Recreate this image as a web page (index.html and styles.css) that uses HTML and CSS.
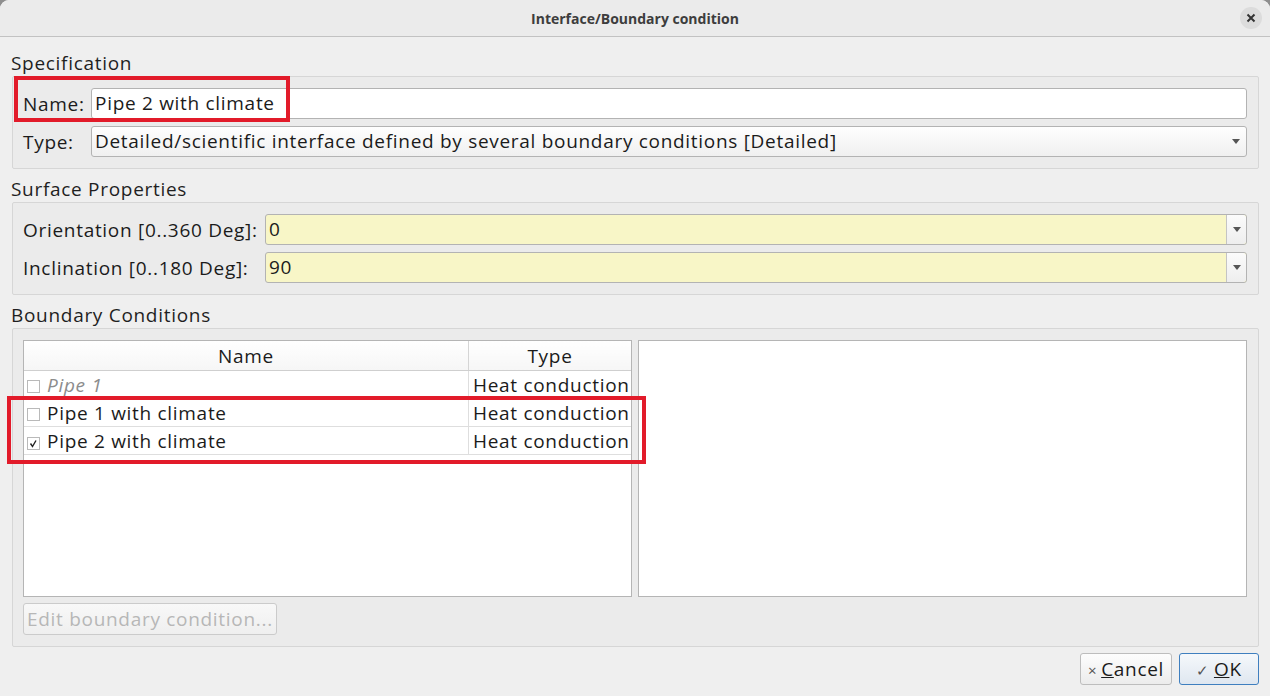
FILE: index.html
```html
<!DOCTYPE html>
<html lang="en">
<head>
  <meta charset="UTF-8">
  <title>Interface/Boundary condition</title>
  <link rel="stylesheet" href="styles.css">
</head>
<body>
  <div class="window">
    <div class="titlebar">
      <span></span>
      <div class="title">Interface/Boundary condition</div>
      <div class="close">
        <svg width="10" height="10" viewBox="0 0 10 10"><path d="M1.5 1.5 L8.5 8.5 M8.5 1.5 L1.5 8.5" stroke="#333" stroke-width="2"/></svg>
      </div>
    </div>

    <div class="content">
      <div class="section-title">Specification</div>
      <div class="group form spec">
        <label>Name:</label>
        <div class="lineedit">Pipe 2 with climate</div>
        <label>Type:</label>
        <div class="combo">
          <span class="value">Detailed/scientific interface defined by several boundary conditions [Detailed]</span>
          <span class="arrow"></span>
        </div>
      </div>

      <div class="section-title">Surface Properties</div>
      <div class="group form surface">
        <label>Orientation [0..360 Deg]:</label>
        <div class="combo editable">
          <span class="value">0</span>
          <span class="drop"><span class="arrow"></span></span>
        </div>
        <label>Inclination [0..180 Deg]:</label>
        <div class="combo editable">
          <span class="value">90</span>
          <span class="drop"><span class="arrow"></span></span>
        </div>
      </div>

      <div class="section-title">Boundary Conditions</div>
      <div class="group bc">
        <div class="panes">
          <div class="view">
            <table class="bc-table">
              <thead>
                <tr><th>Name</th><th>Type</th></tr>
              </thead>
              <tbody>
                <tr class="inactive">
                  <td><span class="check"></span><span class="item">Pipe 1</span></td>
                  <td>Heat conduction</td>
                </tr>
                <tr>
                  <td><span class="check"></span><span class="item">Pipe 1 with climate</span></td>
                  <td>Heat conduction</td>
                </tr>
                <tr>
                  <td>
                    <span class="check checked">
                      <svg width="11" height="11" viewBox="0 0 11 11"><path d="M2.5 5.5 L4.5 8.5 L8 2.5" fill="none" stroke="#222" stroke-width="1.4"/></svg>
                    </span><span class="item">Pipe 2 with climate</span>
                  </td>
                  <td>Heat conduction</td>
                </tr>
              </tbody>
            </table>
          </div>
          <div class="view"></div>
        </div>
        <div class="bc-actions">
          <button class="btn" disabled>Edit boundary condition...</button>
        </div>
      </div>

      <div class="footer">
        <button class="btn cancel"><span class="icon">&#215;</span><u>C</u>ancel</button>
        <button class="btn ok"><span class="icon">&#10003;</span><u>O</u>K</button>
      </div>
    </div>

    <!-- highlight frames -->
    <div class="mark mark-name"></div>
    <div class="mark mark-rows"></div>
  </div>
</body>
</html>
```

FILE: styles.css
```css
html, body {
  margin: 0;
  padding: 0;
  background: #8e8e8e;
}

body {
  font-family: "Open Sans", "Noto Sans", sans-serif;
  font-size: 19px;
  letter-spacing: 0.7px;
  color: #1b1b1b;
}

.window {
  position: relative;
  width: 1270px;
  height: 696px;
  background: #efefef;
  border-radius: 9px 9px 0 0;
  overflow: hidden;
}

.titlebar {
  display: grid;
  grid-template-columns: 1fr auto 1fr;
  align-items: center;
  height: 36px;
  background: #ebebeb;
  border-bottom: 1px solid #c2c2c2;
}

.title {
  font-size: 14px;
  font-weight: bold;
  letter-spacing: 0;
  color: #3d3d3d;
}

.close {
  justify-self: end;
  margin-right: 8px;
  width: 22px;
  height: 22px;
  border-radius: 50%;
  background: #dcdcdc;
  display: flex;
  align-items: center;
  justify-content: center;
}

.content {
  padding: 13px 11px 0 12px;
}

.section-title {
  height: 26px;
  line-height: 26px;
  margin-left: -1px;
  margin-top: 7px;
  color: #1f1f1f;
}

.section-title:first-child {
  margin-top: 0;
}

.group {
  background: #ebebeb;
  border: 1px solid #d6d6d6;
  border-radius: 2px;
  padding: 11px 11px 11px 10px;
}

.form {
  display: grid;
  align-items: center;
  row-gap: 7px;
  column-gap: 6px;
}

.spec {
  grid-template-columns: 62px 1fr;
}

.surface {
  grid-template-columns: 236px 1fr;
}

.lineedit, .combo {
  height: 29px;
  line-height: 29px;
  border: 1px solid #b3b3b3;
  border-radius: 3px;
  padding: 0 3px;
  white-space: nowrap;
}

.lineedit {
  background: #fff;
}

.combo {
  display: flex;
  align-items: center;
  background: linear-gradient(#fefefe, #f0f0f0);
}

.combo .value {
  flex: 1;
  overflow: hidden;
}

.arrow {
  width: 0;
  height: 0;
  border-left: 4px solid transparent;
  border-right: 4px solid transparent;
  border-top: 5px solid #555;
  margin-right: 3px;
}

.combo.editable {
  background: #f8f6c7;
  padding-right: 0;
}

.drop {
  width: 19px;
  height: 29px;
  border-left: 1px solid #c4c4c4;
  border-radius: 0 3px 3px 0;
  background: linear-gradient(#fbfbfb, #eeeeee);
  display: flex;
  align-items: center;
  justify-content: center;
}

.drop .arrow {
  margin-right: 0;
}

.panes {
  display: grid;
  grid-template-columns: 1fr 1fr;
  column-gap: 6px;
  height: 257px;
}

.view {
  background: #fff;
  border: 1px solid #b5b5b5;
}

.bc-table {
  width: 100%;
  border-collapse: collapse;
}

.bc-table th {
  height: 27px;
  font-weight: normal;
  text-align: center;
  background: linear-gradient(#ffffff, #f6f6f6);
  border-bottom: 1px solid #cfcfcf;
}

.bc-table th:first-child {
  width: 442px;
  border-right: 1px solid #d5d5d5;
}

.bc-table td {
  height: 27px;
  padding: 0 0 0 4px;
  border-bottom: 1px solid #dedede;
  white-space: nowrap;
}

.bc-table td:first-child {
  padding-left: 3px;
  border-right: 1px solid #dedede;
}

.check {
  display: inline-flex;
  align-items: center;
  justify-content: center;
  vertical-align: -1px;
  width: 11px;
  height: 11px;
  border: 1px solid #b9b9b9;
  background: #fff;
  margin-right: 7px;
}

.inactive .item {
  font-style: italic;
  color: #8c8c8c;
}

.bc-actions {
  margin-top: 6px;
}

.btn {
  font-family: inherit;
  font-size: 19px;
  letter-spacing: 0.7px;
  height: 32px;
  border: 1px solid #bdbdbd;
  border-radius: 3px;
  background: linear-gradient(#fdfdfd, #ececec);
  color: #1b1b1b;
  padding: 0 3px;
}

.btn:disabled {
  color: #b7b7b7;
  border-color: #cbcbcb;
  background: linear-gradient(#f8f8f8, #efefef);
}

.footer {
  display: flex;
  justify-content: flex-end;
  gap: 7px;
  margin-top: 6px;
}

.footer .btn {
  padding: 0 6px;
}

.icon {
  font-size: 15px;
  color: #555;
  margin-right: 4px;
}

.cancel {
  width: 92px;
}

.ok {
  width: 80px;
  border-color: #3f7fbf;
  background: linear-gradient(#f5f8fb, #dfe7f0);
}

.mark {
  position: absolute;
  border: 4px solid #e21b2a;
  pointer-events: none;
}

.mark-name {
  left: 14px;
  top: 76px;
  width: 268px;
  height: 38px;
}

.mark-rows {
  left: 7px;
  top: 396px;
  width: 631px;
  height: 60px;
}
```
